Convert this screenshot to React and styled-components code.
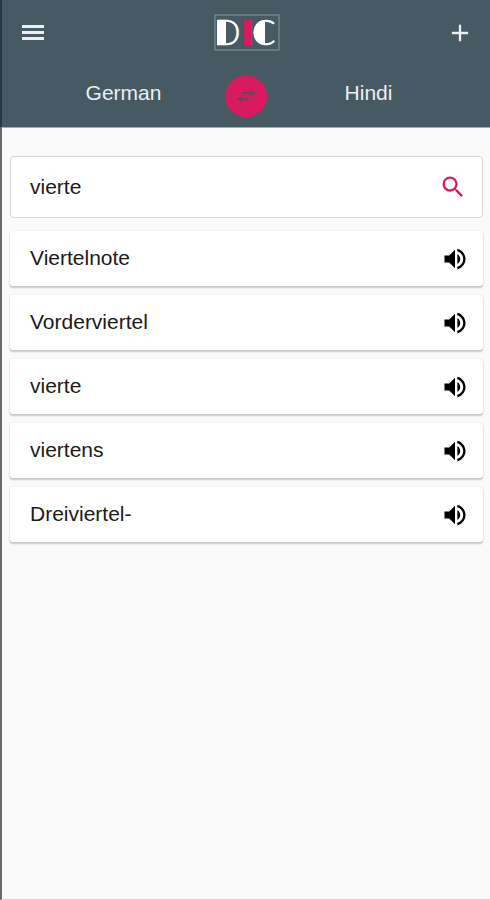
import React, { useState } from 'react'
import styled, { createGlobalStyle } from 'styled-components';
import { MdAdd, MdSearch, MdVolumeUp } from 'react-icons/md';

const words = ['Viertelnote', 'Vorderviertel', 'vierte', 'viertens', 'Dreiviertel-'];

function Logo() {
    return (
        <LogoMark viewBox="0 0 66 37" role="img" aria-label="DIC">
            <rect x="1" y="1" width="64" height="35" fill="none" stroke="#8b989d" strokeWidth="1" />
            <rect x="3" y="6" width="9" height="25" />
            <path d="M51 6a11.500 12.500 0 0 0 0 25z" />
            <LogoLetter x="0" y="31">D</LogoLetter>
            <LogoLetter x="29" y="29" $bold>I</LogoLetter>
            <LogoLetter x="38" y="31">C</LogoLetter>
        </LogoMark>
    )
}

function MenuIcon() {
    return (
        <svg viewBox="0 0 28 28" width="28" height="28" fill="currentColor">
            <path d="M3 6h22v3H3zM3 12h22v3H3zM3 18h22v3H3z" />
        </svg>
    )
}

function Header() {
    return (
        <HeaderBar>
            <Toolbar>
                <IconButton aria-label="Menu"><MenuIcon /></IconButton>
                <Logo />
                <IconButton aria-label="Add"><MdAdd /></IconButton>
            </Toolbar>
            <Languages>
                <Language>German</Language>
                <SwapButton aria-label="Swap languages">
                    <svg viewBox="0 0 20 12" width="20" height="12" fill="currentColor">
                        <path d="M6 2h8V0l6 3-6 3V4H6zM13 10H6v2L0 9l6-3v2h7z" />
                    </svg>
                </SwapButton>
                <Language>Hindi</Language>
            </Languages>
        </HeaderBar>
    )
}

function App() {
    const [search, setSearch] = useState('vierte');

    return (
        <Container>
            <GlobalStyle />
            <Header />
            <Content>
                <SearchBox>
                    <SearchInput
                        aria-label="Search word"
                        value={search}
                        onChange={(e) => setSearch(e.target.value)}
                    />
                    <IconButton $color="#d81b60" aria-label="Search"><MdSearch /></IconButton>
                </SearchBox>
                <WordList>
                    {
                        words.map(word => (
                            <WordCard key={word}>
                                <Word>{word}</Word>
                                <IconButton $color="#000" aria-label={`Listen to ${word}`}><MdVolumeUp /></IconButton>
                            </WordCard>
                        ))
                    }
                </WordList>
            </Content>
        </Container>
    )
}

export default App;

const GlobalStyle = createGlobalStyle`
    * {
        box-sizing: border-box;
    }
    body {
        margin: 0;
        background-color: #fafafa;
        font-family: "Liberation Sans", Arial, sans-serif;
        font-size: 21px;
        color: #1a1a1a;
    }
`

const Container = styled.div`
    min-height: 100vh;
    border-left: 2px solid #6b6b6b;
    border-bottom: 1px solid #d0d0d0;
`

const HeaderBar = styled.header`
    margin-left: -2px;
    padding-bottom: 10px;
    border-left: 2px solid #263842;
    border-bottom: 1px solid #a3adb0;
    background-color: #455a62;
    color: #eceff1;
`

const Toolbar = styled.div`
    display: grid;
    grid-template-columns: 1fr auto 1fr;
    align-items: center;
    height: 65px;
    padding: 0 16px 0 17px;

    > :last-child {
        justify-self: end;
    }
`

const IconButton = styled.button`
    display: flex;
    padding: 0;
    border: none;
    background: none;
    color: ${props => props.$color || '#eceff1'};
    font-size: 28px;
    cursor: pointer;
    justify-self: start;
`

const LogoMark = styled.svg`
    width: 66px;
    height: 37px;
    overflow: visible;
    fill: #fff;
`

const LogoLetter = styled.text`
    font-family: Lato, sans-serif;
    font-size: ${props => props.$bold ? 29 : 35}px;
    font-weight: ${props => props.$bold ? 900 : 300};
    fill: ${props => props.$bold ? '#d81b60' : '#fff'};
    stroke: ${props => props.$bold ? '#d81b60' : '#fff'};
    stroke-width: ${props => props.$bold ? 4 : 0.5};
`

const Languages = styled.div`
    display: grid;
    grid-template-columns: 1fr 42px 1fr;
    align-items: center;
    height: 52px;
    padding: 10px 20px 0;
`

const Language = styled.span`
    padding-bottom: 7px;
    text-align: center;
`

const SwapButton = styled.button`
    display: flex;
    align-items: center;
    justify-content: center;
    width: 42px;
    height: 42px;
    padding: 0;
    border: none;
    border-radius: 50%;
    background-color: #d81b60;
    color: #65465f;
    cursor: pointer;
`

const Content = styled.main`
    padding: 28px 7px 16px 8px;
`

const SearchBox = styled.div`
    display: flex;
    align-items: center;
    height: 62px;
    padding: 0 15px 0 19px;
    border: 1px solid #d6d6d6;
    border-radius: 4px;
    background-color: #fff;
`

const SearchInput = styled.input`
    flex: 1;
    min-width: 0;
    padding: 0;
    border: none;
    outline: none;
    background: none;
    font: inherit;
    color: inherit;
`

const WordList = styled.ul`
    display: flex;
    flex-direction: column;
    gap: 9px;
    margin: 13px 0 0;
    padding: 0;
    list-style: none;
`

const WordCard = styled.li`
    display: flex;
    align-items: center;
    justify-content: space-between;
    height: 55px;
    padding: 0 14px 0 20px;
    border-radius: 3px;
    background-color: #fff;
    box-shadow: 0 2px 2px rgba(0,0,0,0.2), 0 0 2px rgba(0,0,0,0.1);
`

const Word = styled.span`
    padding-bottom: 2px;
`
